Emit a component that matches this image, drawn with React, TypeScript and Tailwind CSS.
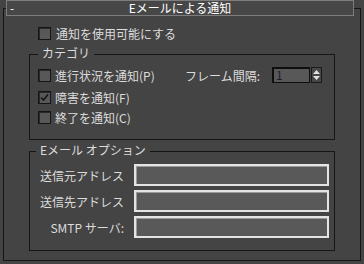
import React from "react";

function Check({ checked = false }: { checked?: boolean }) {
  return (
    <div className="w-[13px] h-[13px] shrink-0 border border-[#151515] bg-[#585858] shadow-[inset_1px_1px_0_#2a2a2a] flex items-center justify-center">
      {checked && (
        <svg width="9" height="9" viewBox="0 0 9 9">
          <path d="M1 4.5 L3.5 7 L8 1.5" fill="none" stroke="#151515" strokeWidth="1.6" />
        </svg>
      )}
    </div>
  );
}

function TextInput() {
  return <div className="w-[195px] h-[22px] border-2 border-[#e4e4e4] bg-[#595959] shadow-[inset_1px_1px_0_#9a9a9a]" />;
}

export default function App() {
  return (
    <div className="w-[364px] h-[264px] bg-[#444444] overflow-hidden text-[12px] leading-[13px] text-[#dcdcdc] font-['Noto_Sans_CJK_JP',sans-serif]">
      {/* title bar */}
      <div className="relative z-10 ml-[6px] w-[348px] h-[16px] border border-[#7e7e7e] bg-[#474747] flex items-center">
        <span className="w-[8px] pl-[3px] text-white leading-[14px]">-</span>
        <span className="flex-1 text-center text-white leading-[14px] pr-[8px]">Eメールによる通知</span>
      </div>

      {/* rollout frame */}
      <div className="ml-[3px] -mt-[8px] w-[358px] h-[253px] border border-[#161616] flex flex-col">
        <div className="mt-[18px] ml-[34px] flex items-center gap-[5px] h-[13px]">
          <Check />
          <span>通知を使用可能にする</span>
        </div>

        {/* category */}
        <div className="relative mt-[14px] ml-[25px] w-[306px] h-[86px] border border-[#161616] flex flex-col">
          <span className="absolute left-[8px] -top-[9px] px-[4px] bg-[#444444] leading-[14px]">カテゴリ</span>

          <div className="mt-[12px] ml-[8px] flex items-center h-[16px]">
            <div className="w-[147px] flex items-center gap-[4px]">
              <Check />
              <span>進行状況を通知(P)</span>
            </div>
            <span className="w-[87px]">フレーム間隔:</span>
            <div className="w-[38px] h-[16px] border border-[#0e0e0e] border-t-2 border-l-2 bg-[#585858] text-[#1c1c34] leading-[12px] pl-[2px]">1</div>
            <div className="ml-[1px] w-[11px] h-[16px] border border-[#1a1a1a] bg-[#474747] flex flex-col items-center justify-center gap-[2px]">
              <svg width="7" height="4" viewBox="0 0 7 4"><path d="M3.5 0 L7 4 L0 4 Z" fill="#e0e0e0" /></svg>
              <svg width="7" height="4" viewBox="0 0 7 4"><path d="M0 0 L7 0 L3.5 4 Z" fill="#e0e0e0" /></svg>
            </div>
          </div>

          <div className="mt-[8px] ml-[8px] flex items-center gap-[4px] h-[13px]">
            <Check checked />
            <span>障害を通知(F)</span>
          </div>

          <div className="mt-[7px] ml-[8px] flex items-center gap-[4px] h-[13px]">
            <Check />
            <span>終了を通知(C)</span>
          </div>
        </div>

        {/* email options */}
        <div className="relative mt-[11px] ml-[25px] w-[306px] h-[100px] border border-[#161616] flex flex-col gap-[4px] pt-[12px]">
          <span className="absolute left-[6px] -top-[9px] px-[4px] bg-[#444444] leading-[14px]">Eメール オプション</span>

          <div className="flex items-center gap-[10px]">
            <span className="w-[94px] text-right">送信元アドレス</span>
            <TextInput />
          </div>
          <div className="flex items-center gap-[10px]">
            <span className="w-[94px] text-right">送信先アドレス</span>
            <TextInput />
          </div>
          <div className="flex items-center gap-[10px]">
            <span className="w-[94px] text-right">SMTP サーバ:</span>
            <TextInput />
          </div>
        </div>
      </div>
    </div>
  );
}
